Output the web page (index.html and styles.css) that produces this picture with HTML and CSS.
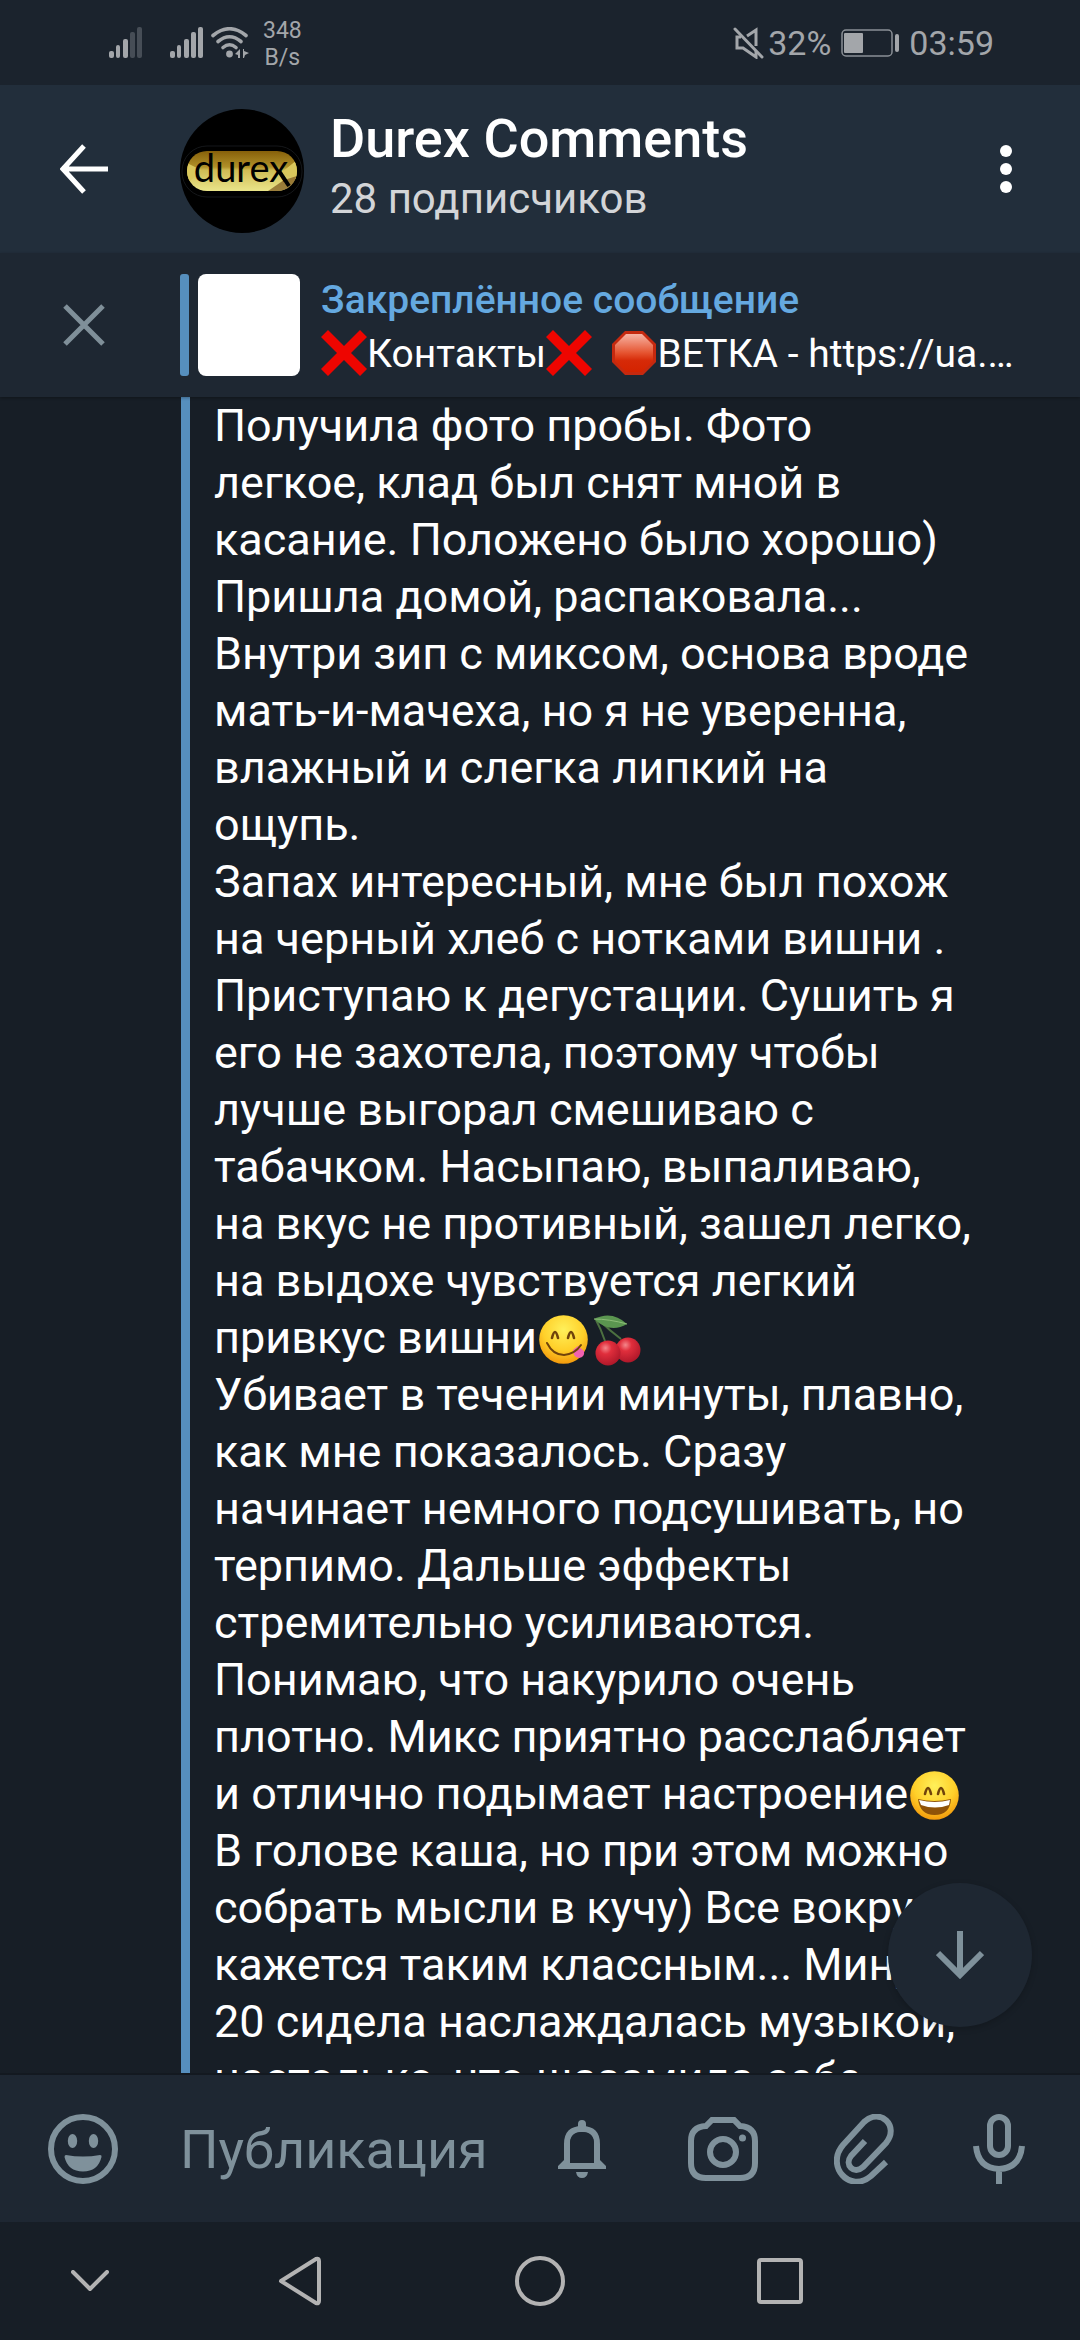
FILE: index.html
```html
<!DOCTYPE html>
<html lang="ru">
<head>
    <meta charset="UTF-8">
    <meta name="viewport" content="width=device-width, initial-scale=1.0">
    <title>Durex Comments</title>
    <link rel="stylesheet" href="styles.css">
</head>
<body>
    <!-- STATUS BAR -->
    <div class="status-bar">
        <div class="status-group">
            <svg class="signal" width="33" height="31" viewBox="0 0 33 31" fill="#a3a6aa">
                <rect x="0" y="24" width="5" height="7" rx="2"/>
                <rect x="7" y="18" width="4" height="13" rx="2"/>
                <rect x="14" y="12" width="5" height="19" rx="2"/>
                <rect x="21" y="5" width="5" height="26" rx="2" fill="#464d56"/>
                <rect x="28" y="0" width="5" height="31" rx="2" fill="#464d56"/>
            </svg>
            <svg class="signal" width="33" height="31" viewBox="0 0 33 31" fill="#a3a6aa">
                <rect x="0" y="24" width="5" height="7" rx="2"/>
                <rect x="7" y="18" width="4" height="13" rx="2"/>
                <rect x="14" y="12" width="5" height="19" rx="2"/>
                <rect x="21" y="5" width="5" height="26" rx="2"/>
                <rect x="28" y="0" width="5" height="31" rx="2"/>
            </svg>
            <svg class="wifi" width="38" height="31" viewBox="0 0 38 31" fill="none" stroke="#a3a6aa" stroke-width="3.6" stroke-linecap="round">
                <path d="M2 8.5Q18.500 -5 35 8.500"/>
                <path d="M7 14.500Q18.500 5 30 14.500"/>
                <path d="M12 20.500Q18.500 15 25 20.500"/>
                <circle cx="18.500" cy="27" r="3.400" fill="#a3a6aa" stroke="none"/>
                <path d="M29 22v9h-2v-3l-3-1 3-3zM32 22l1 0v2l5 2-4 2-1 3h-1z" fill="#a3a6aa" stroke="none"/>
            </svg>
            <div class="net-speed">348<br>B/s</div>
        </div>
        <div class="status-group status-right">
            <svg width="31" height="32" viewBox="0 0 31 32" fill="none" stroke="#a3a6aa" stroke-width="3">
                <path d="M2 2l27 28" stroke-linecap="round"/>
                <path d="M14 9l9-6v16"/>
                <path d="M8 10H4v11h6l13 9v-6"/>
            </svg>
            <span>32%</span>
            <svg class="battery" width="58" height="28" viewBox="0 0 58 28">
                <rect x="1" y="1" width="50" height="26" rx="4" fill="none" stroke="#8b9096" stroke-width="1.500"/>
                <rect x="3" y="4" width="19" height="20" rx="1" fill="#a3a6aa"/>
                <rect x="54" y="5" width="4" height="18" rx="2" fill="#a3a6aa"/>
            </svg>
            <span>03:59</span>
        </div>
    </div>

    <!-- CHAT HEADER -->
    <header class="header">
        <button class="side-btn" aria-label="Назад">
            <svg width="48" height="50" viewBox="0 0 48 50" fill="none" stroke="#fff" stroke-width="5">
                <path d="M24 2L3 25l21 23M3 25h45"/>
            </svg>
        </button>
        <svg class="avatar" width="124" height="124" viewBox="0 0 124 124">
            <defs>
                <linearGradient id="gold" x1="0" y1="0" x2="0" y2="1">
                    <stop offset="0" stop-color="#86600a"/>
                    <stop offset="0.400" stop-color="#b09029"/>
                    <stop offset="0.480" stop-color="#cfbb54"/>
                    <stop offset="1" stop-color="#eae58a"/>
                </linearGradient>
                <clipPath id="pill"><rect x="7" y="42" width="110" height="40" rx="20"/></clipPath>
            </defs>
            <circle cx="62" cy="62" r="62" fill="#000"/>
            <rect x="2" y="37" width="120" height="51" rx="25" fill="none" stroke="#15171a" stroke-width="1"/>
            <rect x="7" y="42" width="110" height="40" rx="20" fill="url(#gold)"/>
            <g clip-path="url(#pill)">
                <path d="M7 54l14 7-14 14zM117 51l-15 12 15 8z" fill="#d9c75c"/>
                <path d="M117 67l-13 4-16 11h29z" fill="#7a541c" opacity="0.700"/>
                <path d="M99 62l10 15" stroke="#000" stroke-width="4"/>
            </g>
            <text x="61" y="73" text-anchor="middle" class="logo-text">durex</text>
        </svg>
        <div class="chat-info">
            <h1>Durex Comments</h1>
            <p>28 подписчиков</p>
        </div>
        <button class="menu-btn" aria-label="Меню">
            <svg width="12" height="48" viewBox="0 0 12 48" fill="#fff">
                <circle cx="6" cy="6" r="6"/>
                <circle cx="6" cy="24" r="6"/>
                <circle cx="6" cy="42" r="6"/>
            </svg>
        </button>
    </header>

    <!-- PINNED MESSAGE -->
    <div class="pinned">
        <button class="side-btn" aria-label="Закрыть">
            <svg width="42" height="42" viewBox="0 0 42 42" stroke="#7f8f99" stroke-width="5">
                <path d="M2 2l38 38M40 2L2 40"/>
            </svg>
        </button>
        <div class="pin-line"></div>
        <div class="pin-thumb"></div>
        <div class="pin-text">
            <h2>Закреплённое сообщение</h2>
            <p><svg class="pin-emoji" viewBox="0 0 46 46" role="img" aria-label="❌"><path d="M7 0l16 16L39 0l7 7-16 16 16 16-7 7-16-16L7 46l-7-7 16-16L0 7z" fill="#ee0500"/></svg>Контакты<svg class="pin-emoji" viewBox="0 0 46 46" role="img" aria-label="❌"><path d="M7 0l16 16L39 0l7 7-16 16 16 16-7 7-16-16L7 46l-7-7 16-16L0 7z" fill="#ee0500"/></svg>&nbsp; <svg class="pin-emoji" viewBox="0 0 46 46" role="img" aria-label="🛑">
                <defs>
                    <linearGradient id="stop" x1="0" y1="0" x2="0" y2="1">
                        <stop offset="0" stop-color="#f7b3a3"/>
                        <stop offset="0.500" stop-color="#e5532f"/>
                        <stop offset="0.700" stop-color="#d62a08"/>
                        <stop offset="1" stop-color="#d42300"/>
                    </linearGradient>
                </defs>
                <path d="M14 1h18l13 13v18L32 45H14L1 32V14z" fill="#c5290f"/>
                <path d="M15 4h16l11 11v16L31 42H15L4 31V15z" fill="url(#stop)"/>
            </svg>ВЕТКА - https://ua.…</p>
        </div>
    </div>

    <!-- MESSAGES -->
    <main class="chat">
        <div class="message">
            Получила фото пробы. Фото<br>
            легкое, клад был снят мной в<br>
            касание. Положено было хорошо)<br>
            Пришла домой, распаковала...<br>
            Внутри зип с миксом, основа вроде<br>
            мать-и-мачеха, но я не уверенна,<br>
            влажный и слегка липкий на<br>
            ощупь.<br>
            Запах интересный, мне был похож<br>
            на черный хлеб с нотками вишни .<br>
            Приступаю к дегустации. Сушить я<br>
            его не захотела, поэтому чтобы<br>
            лучше выгорал смешиваю с<br>
            табачком. Насыпаю, выпаливаю,<br>
            на вкус не противный, зашел легко,<br>
            на выдохе чувствуется легкий<br>
            привкус вишни<svg class="emoji" viewBox="0 0 53 53" role="img" aria-label="😋">
                <defs>
                    <radialGradient id="face" cx="0.500" cy="0.300" r="0.700">
                        <stop offset="0" stop-color="#fff05a"/>
                        <stop offset="0.600" stop-color="#ffd02a"/>
                        <stop offset="1" stop-color="#f39a0c"/>
                    </radialGradient>
                </defs>
                <circle cx="26.500" cy="26.500" r="24.300" fill="url(#face)"/>
                <path d="M15 25q3-12 6 0M31 25q3-12 6 0" fill="none" stroke="#70430b" stroke-width="2.600" stroke-linecap="round"/>
                <path d="M36 37l5-4 6 5q1 6-5 7-3 0-5-3z" fill="#f262b0"/>
                <path d="M10 30q6 12 17 12 11-1 17-10" fill="none" stroke="#70430b" stroke-width="2" stroke-linecap="round"/>
            </svg><svg class="emoji" viewBox="0 0 53 53" role="img" aria-label="🍒">
                <defs>
                    <radialGradient id="cherry" cx="0.400" cy="0.300" r="0.700">
                        <stop offset="0" stop-color="#f4868a"/>
                        <stop offset="0.350" stop-color="#e02e3c"/>
                        <stop offset="1" stop-color="#b0182a"/>
                    </radialGradient>
                </defs>
                <path d="M6 7q5 9 9 21M10 8q9 9 21 18" fill="none" stroke="#4c7040" stroke-width="2"/>
                <circle cx="38" cy="37" r="12.500" fill="url(#cherry)"/>
                <circle cx="18" cy="40" r="12.500" fill="url(#cherry)"/>
                <path d="M4 6Q22-3 37 11 20 21 4 6z" fill="#5b9650"/>
                <path d="M4 6q15 0 33 5" fill="none" stroke="#8dbd78" stroke-width="1"/>
            </svg><br>
            Убивает в течении минуты, плавно,<br>
            как мне показалось. Сразу<br>
            начинает немного подсушивать, но<br>
            терпимо. Дальше эффекты<br>
            стремительно усиливаются.<br>
            Понимаю, что накурило очень<br>
            плотно. Микс приятно расслабляет<br>
            и отлично подымает настроение<svg class="emoji" viewBox="0 0 53 53" role="img" aria-label="😄">
                <circle cx="26.500" cy="26.500" r="24.300" fill="url(#face)"/>
                <path d="M17 25q3-12 6 0M30 25q3-12 6 0" fill="none" stroke="#70430b" stroke-width="2.600" stroke-linecap="round"/>
                <path d="M10 30q16 4 33 0-1 16-16.500 16Q12 46 10 30z" fill="#8f5208"/>
                <path d="M11 31q16 4 31 0l-1 5q-14 5-28 0z" fill="#fff"/>
            </svg><br>
            В голове каша, но при этом можно<br>
            собрать мысли в кучу) Все вокруг<br>
            кажется таким классным... Минут<br>
            20 сидела наслаждалась музыкой,<br>
            настолько, что шазамила себе
        </div>
        <button class="scroll-btn" aria-label="Вниз">
            <svg width="48" height="48" viewBox="0 0 48 48" fill="none" stroke="#7f919b" stroke-width="6">
                <path d="M24 0v44M2 22l22 22 22-22"/>
            </svg>
        </button>
    </main>

    <!-- COMPOSER -->
    <form class="composer">
        <button type="button" class="smile-btn" aria-label="Эмодзи">
            <svg width="70" height="70" viewBox="0 0 70 70" fill="#7f919b">
                <circle cx="35" cy="35" r="32" fill="none" stroke="#7f919b" stroke-width="6"/>
                <ellipse cx="24.500" cy="27" rx="4.700" ry="7"/>
                <ellipse cx="45.500" cy="27" rx="4.700" ry="7"/>
                <path d="M18 41q17 3 34 0 2 0 1.500 2Q50 57.500 35 57.500T16.500 43q0-2 1.500-2z"/>
            </svg>
        </button>
        <input type="text" class="post-input" placeholder="Публикация" aria-label="Публикация">
        <button type="button" class="tool-btn" aria-label="Уведомления">
            <svg width="48" height="60" viewBox="0 0 48 60" fill="#7f919b">
                <path d="M9 42V25Q9 10 24 10t15 15v22H9z" fill="none" stroke="#7f919b" stroke-width="6"/>
                <path d="M20 9V5q0-4 4-4t4 4v4zM0 50v-3l7-7h34l7 7v3zM18 53h12q-1 6-6 6t-6-6z"/>
                <path d="M12 25h24v19H12z" fill="#1e2732"/>
                <path d="M12 27v-2Q12 13 24 13t12 12v2z" fill="#1e2732"/>
            </svg>
        </button>
        <button type="button" class="tool-btn" aria-label="Камера">
            <svg width="70" height="68" viewBox="0 0 70 68" fill="none" stroke="#7f919b" stroke-width="6">
                <path d="M18 11l6-6h22l6 6q15 1 15 15v22q0 15-15 15H18Q3 63 3 48V26Q3 12 18 11z"/>
                <circle cx="35" cy="37" r="13"/>
                <circle cx="54.500" cy="23" r="3.500" fill="#7f919b" stroke="none"/>
            </svg>
        </button>
        <button type="button" class="tool-btn" aria-label="Прикрепить">
            <svg width="60" height="70" viewBox="0 0 60 70" fill="none" stroke="#7f919b" stroke-width="6">
                <path d="M31 27L17 42c-7 9 3 19 12 11L52 29C66 12 46-7 30 8L9 31C-9 52 16 80 37 62l15-14"/>
            </svg>
        </button>
        <button type="button" class="mic-btn" aria-label="Голосовое сообщение">
            <svg width="52" height="70" viewBox="0 0 52 70" fill="none" stroke="#7f919b" stroke-width="6">
                <rect x="17" y="3" width="18" height="38" rx="9"/>
                <path d="M3 32q2 22 23 23 21-1 23-23M26 55v15"/>
            </svg>
        </button>
    </form>

    <!-- SYSTEM NAVIGATION -->
    <nav class="nav-bar">
        <button aria-label="Скрыть">
            <svg width="38" height="22" viewBox="0 0 38 22" fill="none" stroke="#b3b3b3" stroke-width="4" stroke-linecap="round" stroke-linejoin="round">
                <path d="M2 2l17 17L36 2"/>
            </svg>
        </button>
        <button aria-label="Назад">
            <svg width="44" height="50" viewBox="0 0 44 50" fill="none" stroke="#b3b3b3" stroke-width="4" stroke-linejoin="round">
                <path d="M3 25L38 3q3-1 3 2v40q0 3-3 2z"/>
            </svg>
        </button>
        <button aria-label="Домой">
            <svg width="50" height="50" viewBox="0 0 50 50" fill="none" stroke="#b3b3b3" stroke-width="4">
                <circle cx="25" cy="25" r="23"/>
            </svg>
        </button>
        <button aria-label="Недавние">
            <svg width="46" height="46" viewBox="0 0 46 46" fill="none" stroke="#b3b3b3" stroke-width="4">
                <rect x="2" y="2" width="42" height="42" rx="2"/>
            </svg>
        </button>
    </nav>
</body>
</html>
```
FILE: styles.css
```css
* {
    box-sizing: border-box;
}
body {
    margin: 0;
    height: 100vh;
    display: flex;
    flex-direction: column;
    overflow: hidden;
    font-family: Roboto, "Noto Sans", sans-serif;
    background-color: #171e26;
    color: #fff;
}
h1, h2, p {
    margin: 0;
    font-weight: 500;
    white-space: nowrap;
}
button {
    display: flex;
    align-items: center;
    justify-content: center;
    padding: 0;
    border: none;
    background: none;
    cursor: pointer;
}
svg {
    flex-shrink: 0;
}

/* status bar */
.status-bar {
    display: flex;
    justify-content: space-between;
    align-items: center;
    height: 85px;
    padding: 0 86px 0 109px;
    background-color: #1b232d;
    color: #a3a6aa;
}
.status-group {
    display: flex;
    align-items: center;
}
.signal {
    margin-right: 28px;
}
.signal + .signal {
    margin-right: 8px;
}
.net-speed {
    margin-left: 14px;
    padding-top: 2px;
    font-size: 23px;
    line-height: 27px;
    text-align: center;
}
.status-right {
    font-size: 34px;
}
.status-right span {
    margin-left: 4px;
}
.battery {
    margin: 0 6px 0 10px;
}

/* header */
.header {
    display: flex;
    align-items: center;
    height: 168px;
    background-color: #222e3b;
}
.side-btn {
    width: 168px;
    height: 100%;
    margin-right: 12px;
    flex-shrink: 0;
}
.avatar {
    margin-top: 4px;
}
.logo-text {
    font-family: Lato, sans-serif;
    font-size: 38px;
    fill: #000;
}
.chat-info {
    flex: 1;
    margin-left: 26px;
    padding-top: 4px;
}
.chat-info h1 {
    font-size: 54px;
    line-height: 56px;
}
.chat-info p {
    font-size: 42px;
    line-height: 64px;
    font-weight: 400;
    color: #d3d5d8;
}
.menu-btn {
    width: 148px;
    height: 100%;
}

/* pinned message */
.pinned {
    display: flex;
    align-items: center;
    height: 144px;
    background-color: #1e2732;
    box-shadow: 0 1px 3px rgba(0, 0, 0, 0.3);
    z-index: 1;
}
.pin-line {
    width: 9px;
    height: 102px;
    border-radius: 3px;
    background-color: #568fbe;
}
.pin-thumb {
    width: 102px;
    height: 102px;
    margin: 0 21px 0 9px;
    border-radius: 8px;
    background-color: #fff;
}
.pin-text {
    padding-top: 4px;
}
.pin-text h2 {
    font-size: 39px;
    line-height: 54px;
    color: #65a9e0;
}
.pin-text p {
    font-size: 39px;
    line-height: 54px;
    font-weight: 400;
}
.pin-emoji {
    width: 46px;
    height: 46px;
    vertical-align: -9px;
}

/* messages */
.chat {
    position: relative;
    flex: 1;
    min-height: 0;
    overflow: hidden;
    padding-left: 181px;
    border-bottom: 2px solid #131920;
}
.message {
    padding-left: 24px;
    border-left: 9px solid #568fbe;
    font-size: 45px;
    line-height: 57px;
    white-space: nowrap;
}
.emoji {
    width: 53px;
    height: 53px;
    vertical-align: -13px;
}
.scroll-btn {
    position: absolute;
    right: 48px;
    bottom: 46px;
    width: 144px;
    height: 144px;
    border-radius: 50%;
    background-color: #1e2732;
    box-shadow: 0 2px 6px rgba(0, 0, 0, 0.2);
}

/* composer */
.composer {
    display: flex;
    align-items: center;
    height: 147px;
    padding-right: 16px;
    background-color: #1e2732;
}
.composer button {
    height: 100%;
    flex-shrink: 0;
}
.smile-btn {
    width: 166px;
}
.post-input {
    flex: 1;
    min-width: 0;
    padding: 2px 0 0 14px;
    border: none;
    outline: none;
    background: none;
    color: #fff;
    font-family: inherit;
    font-size: 54px;
}
.post-input::placeholder {
    color: #7f919b;
    opacity: 1;
}
.tool-btn {
    width: 141px;
}
.mic-btn {
    width: 130px;
}

/* system navigation */
.nav-bar {
    display: grid;
    grid-template-columns: 3fr 4fr 4fr 4fr 3fr;
    height: 118px;
}
```
